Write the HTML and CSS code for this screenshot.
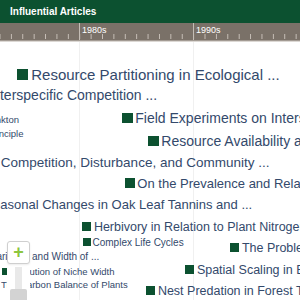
FILE: index.html
```html
<!DOCTYPE html>
<html lang="en">
<head>
    <meta charset="UTF-8">
    <title>Influential Articles</title>
    <link rel="stylesheet" href="styles.css">
</head>
<body>
    <div class="header">Influential Articles</div>

    <!-- timeline axis, one tick per year -->
    <div class="axis">
        <div class="decade" style="left: 79px;">1980s</div>
        <div class="decade" style="left: 193px;">1990s</div>
    </div>

    <div class="canvas">
        <div class="guide" style="left: 79px;"></div>
        <div class="guide" style="left: 193px;"></div>

        <div class="article" style="left: 17px; top: 25.3px; font-size: 15px;"><span class="mark"></span>Resource Partitioning in Ecological ...</div>
        <div class="article" style="left: -25px; top: 46.2px; font-size: 14px;"><span class="mark"></span>Interspecific Competition ...</div>
        <div class="article" style="left: -27px; top: 73px; font-size: 9.5px;"><span class="mark"></span>Plankton</div>
        <div class="article" style="left: 122px; top: 69.2px; font-size: 14px;"><span class="mark"></span>Field Experiments on Interspecific Competition</div>
        <div class="article" style="left: -22px; top: 87px; font-size: 9.5px;"><span class="mark"></span>Principle</div>
        <div class="article" style="left: 148px; top: 92.2px; font-size: 14px;"><span class="mark"></span>Resource Availability and Plant Antiherbivore Defense</div>
        <div class="article" style="left: -12px; top: 113.6px; font-size: 13.5px;"><span class="mark"></span>Competition, Disturbance, and Community ...</div>
        <div class="article" style="left: 125px; top: 135px; font-size: 13px;"><span class="mark"></span>On the Prevalence and Relative Importance</div>
        <div class="article" style="left: -28px; top: 156px; font-size: 13px;"><span class="mark"></span>Seasonal Changes in Oak Leaf Tannins and ...</div>
        <div class="article" style="left: 82px; top: 179.4px; font-size: 12.5px;"><span class="mark"></span>Herbivory in Relation to Plant Nitrogen Content</div>
        <div class="article" style="left: 83px; top: 195.5px; font-size: 10px;"><span class="mark"></span>Complex Life Cycles</div>
        <div class="article" style="left: 230px; top: 200.4px; font-size: 12.5px;"><span class="mark"></span>The Problem of Pattern and Scale</div>
        <div class="article" style="left: -19px; top: 209.5px; font-size: 10px;"><span class="mark"></span>Variation and Width of ...</div>
        <div class="article" style="left: 2px; top: 225px; font-size: 9.5px;"><span class="mark"></span>Evolution of Niche Width</div>
        <div class="article" style="left: 185px; top: 222.4px; font-size: 12.5px;"><span class="mark"></span>Spatial Scaling in Ecology</div>
        <div class="article" style="left: -8px; top: 238px; font-size: 9.5px;"><span class="mark"></span>The Carbon Balance of Plants</div>
        <div class="article" style="left: 146px; top: 243.4px; font-size: 12.5px;"><span class="mark"></span>Nest Predation in Forest Tracts</div>

        <!-- zoom control -->
        <div class="zoom">
            <div class="zoom-in">+</div>
            <div class="zoom-track"><div class="zoom-handle"></div></div>
        </div>
    </div>
</body>
</html>
```

FILE: styles.css
```css
body {
    margin: 0;
    width: 300px;
    height: 300px;
    overflow: hidden;
    font-family: "Liberation Sans", Arial, sans-serif;
    background-color: #fff;
}

.header {
    height: 23px;
    line-height: 23px;
    padding-left: 10px;
    background-color: #0c5130;
    color: #fff;
    font-size: 10px;
    font-weight: bold;
}

.axis {
    position: relative;
    height: 17px;
    background-color: #7a7168;
    background-image: linear-gradient(to right, #c9c1b9 1px, transparent 1px);
    background-size: 11.4px 5px;
    background-position: 10.9px 11px;
    background-repeat: repeat-x;
    border-bottom: 1px solid #a39b93;
}

.decade {
    position: absolute;
    top: 0;
    height: 17px;
    padding-left: 2px;
    border-left: 1px solid #c4bdb5;
    color: #fff;
    font-size: 9px;
    line-height: 14px;
}

.canvas {
    position: relative;
    height: 259px;
    border-top: 1px solid #dcd8d4;
    border-left: 2px solid #7ea693;
    margin-left: -2px;
    overflow: hidden;
}

.guide {
    position: absolute;
    top: 0;
    bottom: 0;
    width: 1px;
    background-color: #f0f0f0;
}

.article {
    position: absolute;
    white-space: nowrap;
    line-height: 1;
    color: #33496b;
}

.mark {
    display: inline-block;
    width: 0.75em;
    height: 0.75em;
    margin-right: 0.2em;
    background-color: #0c5130;
}

.zoom {
    position: absolute;
    left: 7px;
    top: 199px;
    bottom: 0;
    width: 23px;
    background-color: #fff;
}

.zoom-in {
    height: 21px;
    border: 1px solid #cfcfcf;
    border-radius: 3px;
    background-color: #fff;
    box-shadow: 0 1px 2px rgba(0, 0, 0, 0.08);
    color: #8cc63f;
    font-size: 18px;
    font-weight: bold;
    line-height: 20px;
    text-align: center;
}

.zoom-track {
    position: relative;
    width: 7px;
    height: 40px;
    margin: 3px 0 0 8px;
    background-color: #e9e9e9;
}

.zoom-handle {
    position: absolute;
    left: -5px;
    top: 22px;
    width: 17px;
    height: 20px;
    border-radius: 2px;
    background-color: #d3d3d3;
}
```
